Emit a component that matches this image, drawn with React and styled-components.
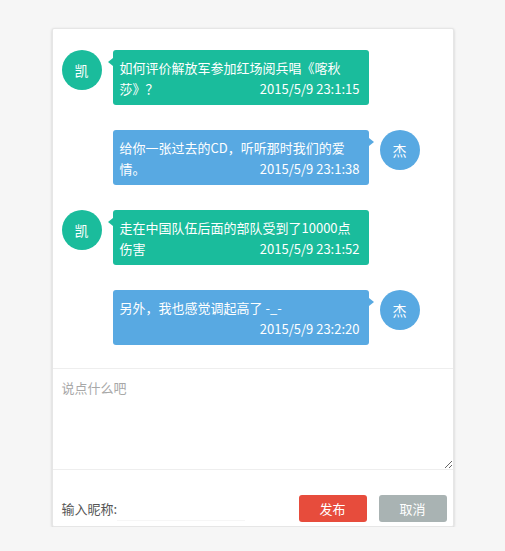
import styled, { createGlobalStyle } from "styled-components";

const GlobalStyle = createGlobalStyle`
  html, body {
    margin: 0;
    padding: 0;
    background: #f6f6f6;
    font-family: "Noto Sans CJK SC", "Noto Sans", sans-serif;
  }
  * {
    box-sizing: border-box;
  }
`;

const GREEN = "#1abc9c";
const BLUE = "#58a9e2";

const Card = styled.div`
  width: 402px;
  margin: 28px auto 0;
  background: #fff;
  border: 1px solid #e6e6e6;
  border-radius: 2px;
  box-shadow: 0 1px 3px rgba(0, 0, 0, 0.18);
`;

const List = styled.div`
  display: flex;
  flex-direction: column;
  gap: 25px;
  padding: 21px 10px 23px 9px;
`;

const Row = styled.div`
  display: flex;
  align-items: flex-start;
  gap: 11px;
  width: 358px;
  justify-content: ${(p) => (p.$mine ? "flex-end" : "flex-start")};
`;

const Avatar = styled.div`
  width: 40px;
  height: 40px;
  flex: none;
  border-radius: 50%;
  background: ${(p) => p.$color};
  color: #fff;
  font-size: 14px;
  display: flex;
  align-items: center;
  justify-content: center;
`;

const Bubble = styled.div`
  position: relative;
  width: 256px;
  min-height: 55px;
  padding: 7px 9px 6px 7px;
  background: ${(p) => p.$color};
  color: #fff;
  font-size: 13px;
  line-height: 21px;
  border-radius: 3px;

  &::before {
    content: "";
    position: absolute;
    top: 8px;
    ${(p) => (p.$mine ? "right: -5px;" : "left: -5px;")}
    border-top: 4px solid transparent;
    border-bottom: 4px solid transparent;
    ${(p) =>
      p.$mine
        ? `border-left: 5px solid ${p.$color};`
        : `border-right: 5px solid ${p.$color};`}
  }
`;

const Time = styled.span`
  float: right;
  margin-left: 10px;
`;

const Editor = styled.textarea`
  display: block;
  width: 100%;
  height: 102px;
  margin: 0;
  padding: 9px 9px;
  border: 1px solid #eeeeee;
  border-left: none;
  border-right: none;
  outline: none;
  font-family: inherit;
  font-size: 13px;
  line-height: 20px;
  color: #333;
  resize: vertical;

  &::placeholder {
    color: #a8a8a8;
  }
`;

const Footer = styled.div`
  display: flex;
  align-items: center;
  gap: 12px;
  padding: 25px 6px 4px 9px;
`;

const Label = styled.label`
  font-size: 13px;
  color: #555;
`;

const NameInput = styled.input`
  width: 128px;
  height: 24px;
  margin-left: -12px;
  border: none;
  border-bottom: 1px solid #f6f6f6;
  outline: none;
  font-family: inherit;
  font-size: 13px;
  margin-right: auto;
`;

const Button = styled.button`
  width: 68px;
  height: 27px;
  border: none;
  border-radius: 3px;
  background: ${(p) => p.$bg};
  color: #fff;
  font-family: inherit;
  font-size: 13px;
  cursor: pointer;
`;

const messages = [
  { who: "凯", mine: false, text: "如何评价解放军参加红场阅兵唱《喀秋莎》？", time: "2015/5/9 23:1:15" },
  { who: "杰", mine: true, text: "给你一张过去的CD，听听那时我们的爱情。", time: "2015/5/9 23:1:38" },
  { who: "凯", mine: false, text: "走在中国队伍后面的部队受到了10000点伤害", time: "2015/5/9 23:1:52" },
  { who: "杰", mine: true, text: "另外，我也感觉调起高了 -_-", time: "2015/5/9 23:2:20" },
];

export default function App() {
  return (
    <>
      <GlobalStyle />
      <Card>
        <List>
          {messages.map((m, i) => {
            const color = m.mine ? BLUE : GREEN;
            return (
              <Row key={i} $mine={m.mine}>
                {!m.mine && <Avatar $color={color}>{m.who}</Avatar>}
                <Bubble $color={color} $mine={m.mine}>
                  {m.text}
                  <Time>{m.time}</Time>
                </Bubble>
                {m.mine && <Avatar $color={color}>{m.who}</Avatar>}
              </Row>
            );
          })}
        </List>
        <Editor placeholder="说点什么吧" />
        <Footer>
          <Label>输入昵称:</Label>
          <NameInput />
          <Button $bg="#e74c3c">发布</Button>
          <Button $bg="#a9b3b3">取消</Button>
        </Footer>
      </Card>
    </>
  );
}
